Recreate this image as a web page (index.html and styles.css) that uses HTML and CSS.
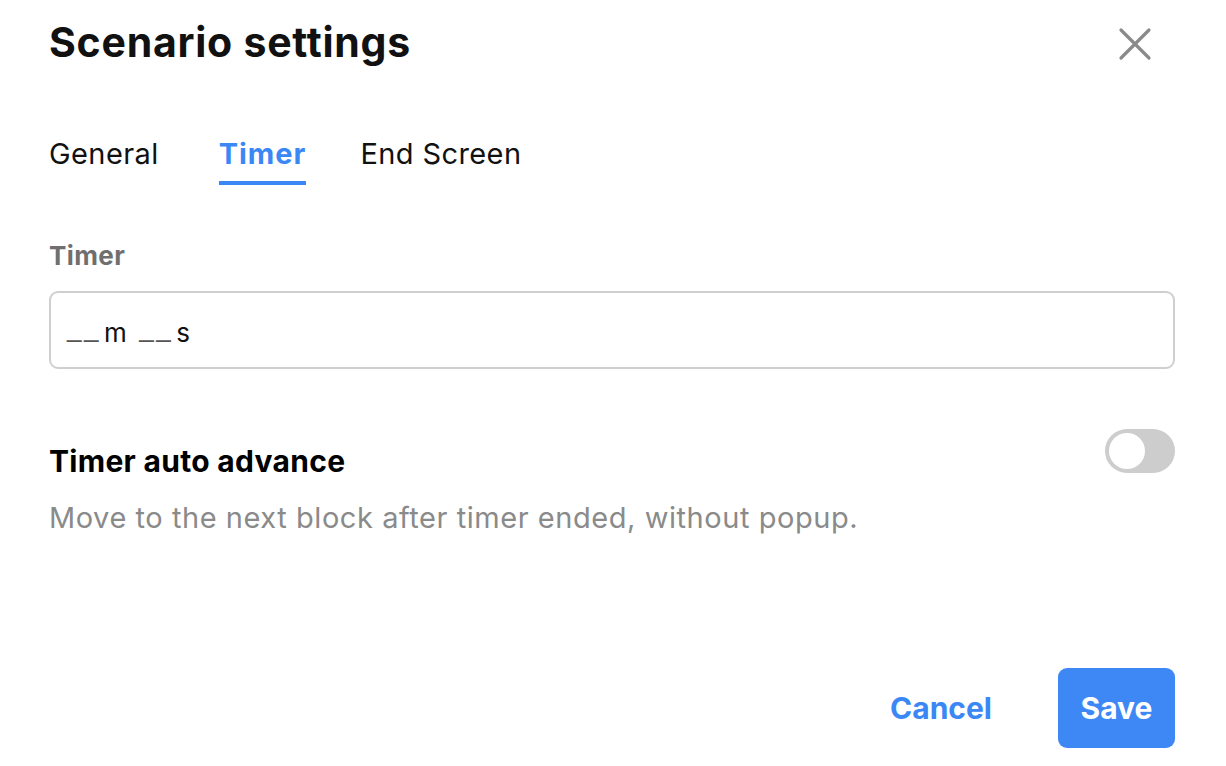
FILE: index.html
```html
<!DOCTYPE html>
<html>
<head>
<meta charset="utf-8">
<link rel="stylesheet" href="styles.css">
</head>
<body>
<div class="modal">
  <header class="head">
    <h1 class="title">Scenario settings</h1>
    <button class="close" aria-label="Close">
      <svg width="34" height="34" viewBox="0 0 34 34"><path d="M3 3 L31 31 M31 3 L3 31" stroke="#8a8a8a" stroke-width="3.2" stroke-linecap="round"/></svg>
    </button>
  </header>
  <nav class="tabs">
    <span class="tab first">General</span>
    <span class="tab active">Timer</span>
    <span class="tab">End Screen</span>
  </nav>
  <section class="field">
    <label class="label">Timer</label>
    <div class="input"><span class="blank">__</span>m <span class="blank">__</span>s</div>
  </section>
  <section class="setting">
    <div class="setting-row">
      <span class="setting-title">Timer auto advance</span>
      <span class="toggle"><span class="knob"></span></span>
    </div>
    <p class="setting-desc">Move to the next block after timer ended, without popup.</p>
  </section>
  <footer class="actions">
    <button class="btn-cancel">Cancel</button>
    <button class="btn-save">Save</button>
  </footer>
</div>
</body>
</html>
```
FILE: styles.css
```css
* { box-sizing: border-box; }
html, body { margin: 0; padding: 0; background: #fff; }
body { font-family: Inter, "Noto Sans", sans-serif; color: #111; }
.modal { width: 1226px; height: 766px; padding: 0 51px 0 49px; display: flex; flex-direction: column; }
.head { display: flex; justify-content: space-between; align-items: center; padding-top: 18px; }
.title { margin: 0; font-size: 41px; line-height: 48px; font-weight: 700; letter-spacing: 0.75px; color: #111; }
.close { background: none; border: 0; padding: 0; margin: 4px 23px 0 0; display: flex; }
.tabs { display: flex; gap: 54px; margin-top: 71px; }
.tab { font-size: 29px; line-height: 34px; letter-spacing: 0.4px; padding-bottom: 10px; border-bottom: 4px solid transparent; color: #111; }
.tab.first { margin-right: 6px; }
.tab.active { color: #3b87f5; font-weight: 700; border-bottom-color: #3b87f5; letter-spacing: 1px; }
.field { margin-top: 55px; }
.label { display: block; font-size: 26px; font-weight: 700; color: #6f6f6f; line-height: 32px; letter-spacing: 0.4px; }
.input { margin-top: 19px; height: 78px; border: 2px solid #cfcfcf; border-radius: 9px; padding: 4px 16px 0; display: flex; align-items: center; font-size: 26px; letter-spacing: 0.6px; word-spacing: 4px; color: #111; white-space: pre; }
.blank { font-family: "Liberation Sans", sans-serif; letter-spacing: 2.5px; color: #555; position: relative; top: -4px; margin-right: 3px; }
.setting { margin-top: 60px; }
.setting-row { display: flex; justify-content: space-between; align-items: flex-start; }
.setting-title { margin-top: 14px; font-size: 30px; line-height: 36px; font-weight: 700; letter-spacing: 0.3px; color: #000; }
.toggle { width: 70px; height: 44px; border-radius: 22px; background: #cdcdcd; padding: 4px; display: flex; }
.knob { width: 36px; height: 36px; border-radius: 50%; background: #fff; }
.setting-desc { margin: 21px 0 0; font-size: 29px; line-height: 35px; letter-spacing: 0.55px; color: #8a8a8a; }
.actions { margin-top: auto; margin-bottom: 18px; display: flex; justify-content: flex-end; align-items: center; gap: 66px; }
.btn-cancel { background: none; border: 0; padding: 0; font: inherit; font-size: 30px; font-weight: 700; color: #3b87f5; }
.btn-save { width: 117px; height: 80px; border: 0; border-radius: 9px; background: #3d88f5; color: #fff; font: inherit; font-size: 30px; font-weight: 700; }
```
